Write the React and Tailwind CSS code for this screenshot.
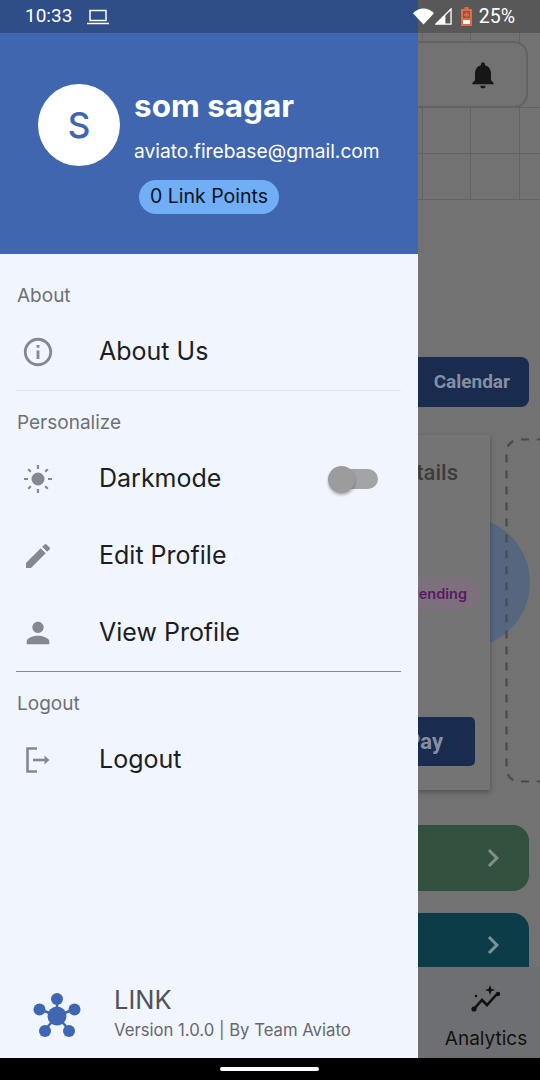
import { MdInfoOutline, MdEdit, MdPerson, MdNotifications, MdChevronRight } from "react-icons/md";

function SunIcon() {
  return (
    <svg viewBox="0 0 30 30" className="h-[30px] w-[30px] text-[#85888e]" fill="currentColor" stroke="currentColor">
      <circle cx="15" cy="15" r="6.5" stroke="none" />
      <g strokeWidth="2.2" fill="none">
        <path d="M15 1v4M15 25v4M1 15h4M25 15h4M5.2 5.2l2.6 2.6M22.2 22.2l2.6 2.6M5.2 24.8l2.6-2.6M22.2 7.8l2.6-2.6" />
      </g>
    </svg>
  );
}

function LogoutIcon() {
  return (
    <svg viewBox="0 0 30 30" className="h-[30px] w-[30px] text-[#85888e]" fill="none" stroke="currentColor">
      <path d="M14 3.500H4.500v23H14" strokeWidth="2.600" />
      <path d="M10 15h14" strokeWidth="2.600" />
      <path d="M21.500 10.500l5 4.500-5 4.500z" fill="currentColor" stroke="none" />
    </svg>
  );
}

function Row({ icon, label, children }) {
  return (
    <div className="flex h-[77px] items-center">
      <div className="flex w-[99px] justify-start pl-[21px]">
        <div className="flex w-[34px] justify-center">{icon}</div>
      </div>
      <span className="text-[25px] leading-none text-[#1c1e24]">{label}</span>
      {children}
    </div>
  );
}

function SectionLabel({ children }) {
  return <div className="pl-[17px] text-[19px] leading-[24px] text-[#6d7077]">{children}</div>;
}

function Logo() {
  return (
    <svg viewBox="0 0 48 48" className="mt-[6px] h-[48px] w-[48px] text-[#3f66b3]" fill="currentColor" stroke="currentColor">
      <path d="M24 24V8M24 24L6 17M24 24L42 17M24 24L11 39M24 24L37 39" strokeWidth="2.500" />
      <g stroke="none">
        <circle cx="24" cy="24" r="9.500" />
        <circle cx="24" cy="7" r="6" />
        <circle cx="6.500" cy="17.500" r="6" />
        <circle cx="41.500" cy="17.500" r="6" />
        <circle cx="12" cy="39" r="6" />
        <circle cx="36" cy="39" r="6" />
      </g>
    </svg>
  );
}

function StatusBar() {
  return (
    <div className="flex h-[33px] items-center justify-between bg-[linear-gradient(90deg,#2f4d86_418px,#585858_418px)] pl-[25px] pr-[25px] font-['Roboto',sans-serif] text-[19px] text-white">
      <div className="flex items-center gap-[15px]">
        <span>10:33</span>
        <svg viewBox="0 0 22 16" className="h-[16px] w-[22px]" fill="none" stroke="currentColor" strokeWidth="1.500">
          <rect x="3" y="1.500" width="16" height="10" />
          <path d="M0 14.500h22" />
        </svg>
      </div>
      <div className="flex items-center">
        <svg viewBox="0 0 22 17" className="h-[17px] w-[21px]" fill="currentColor">
          <path d="M11 17L0 5C3 2 7 0 11 0s8 2 11 5z" />
        </svg>
        <svg viewBox="0 0 18 18" className="ml-[1px] h-[17px] w-[17px]">
          <path d="M17 1v16H1z" fill="none" stroke="currentColor" strokeWidth="1.400" />
          <path d="M11 7v10H1z" fill="currentColor" />
        </svg>
        <svg viewBox="0 0 11 19" className="ml-[9px] h-[19px] w-[11px]">
          <path d="M3.500 0h4v2H11v17H0V2h3.500z" fill="#e8693f" />
          <path d="M2 4h7v7H2z" fill="#7d5d50" />
          <path d="M4.500 5.500h2v1.600h1.600v1.600H6.500v1.600h-2V8.700H3V7.100h1.500z" fill="#e8693f" />
          <path d="M2 13h7v4H2z" fill="#fff" />
        </svg>
        <span className="ml-[7px] text-[19.5px]">25%</span>
      </div>
    </div>
  );
}

function Drawer() {
  return (
    <div className="flex h-full w-[418px] shrink-0 flex-col bg-[#f1f5fd]">
      <div className="flex h-[221px] shrink-0 items-start gap-[14px] bg-[#4066b0] pl-[38px] pt-[51px]">
        <div className="flex h-[82px] w-[82px] items-center justify-center rounded-full bg-white text-[35px] font-medium text-[#4066b0]">S</div>
        <div className="flex flex-col">
          <div className="mt-[3px] text-[31.5px] font-bold leading-[38px] text-white">som sagar</div>
          <div className="mt-[14px] whitespace-nowrap text-[19.2px] leading-[24px] text-white">aviato.firebase@gmail.com</div>
          <div className="ml-[5px] mt-[17px] flex h-[34px] w-[140px] items-center justify-center rounded-full bg-[#70aef5] text-[19.5px] text-[#0b1220]">0 Link Points</div>
        </div>
      </div>

      <div className="mt-[30px]">
        <SectionLabel>About</SectionLabel>
      </div>
      <div className="mt-[5px]">
        <Row icon={<MdInfoOutline className="h-[34px] w-[34px] text-[#85888e]" />} label="About Us" />
      </div>
      <div className="ml-[16px] h-px w-[385px] bg-[#e3e6ec]" />
      <div className="mt-[20px]">
        <SectionLabel>Personalize</SectionLabel>
      </div>
      <div className="mt-[5px]">
        <Row icon={<SunIcon />} label="Darkmode">
          <div className="relative ml-auto mr-[40px] h-[20px] w-[50px]">
            <div className="ml-[12px] h-[20px] w-[38px] rounded-full bg-[#a3a4a6]" />
            <div className="absolute -top-[3px] left-0 h-[27px] w-[27px] rounded-full bg-[#9c9c9c] shadow-[0_2px_3px_rgba(0,0,0,0.3)]" />
          </div>
        </Row>
        <Row icon={<MdEdit className="h-[32px] w-[32px] text-[#85888e]" />} label="Edit Profile" />
        <Row icon={<MdPerson className="h-[34px] w-[34px] text-[#85888e]" />} label="View Profile" />
      </div>
      <div className="ml-[16px] h-px w-[385px] bg-[#85888e]" />
      <div className="mt-[20px]">
        <SectionLabel>Logout</SectionLabel>
      </div>
      <div className="mt-[5px]">
        <Row icon={<LogoutIcon />} label="Logout" />
      </div>

      <div className="mt-auto flex items-center pb-[17px] pl-[33px]">
        <Logo />
        <div className="ml-[33px] flex flex-col">
          <span className="text-[25.5px] leading-[30px] text-[#505257]">LINK</span>
          <span className="mt-[4px] whitespace-nowrap text-[16.7px] leading-[22px] text-[#65686e]">Version 1.0.0 | By Team Aviato</span>
        </div>
      </div>
    </div>
  );
}

function BackgroundStrip() {
  return (
    <div className="relative flex h-full w-[122px] shrink-0 flex-col overflow-hidden bg-[#727272]">
      <div className="relative h-[167px] shrink-0">
        <svg viewBox="0 0 122 167" className="absolute inset-0 h-full w-full" fill="none" stroke="#636363" strokeWidth="1">
          <path d="M4.500 0v167M52.500 0v167M101.500 0v167M0 74.500h122M0 120.500h122M0 166.500h122" />
        </svg>
        <div className="relative -ml-[30px] mr-[12px] mt-[8px] flex h-[67px] items-center justify-end rounded-[14px] border-2 border-[#636363] bg-[#727272] pr-[27px]">
          <MdNotifications className="h-[32px] w-[32px] text-[#161616]" />
        </div>
      </div>

      <div className="ml-[-20px] mr-[11px] mt-[157px] flex h-[50px] shrink-0 items-center justify-end rounded-[8px] bg-[#1a2b50] pr-[19px] font-['Roboto',sans-serif] text-[19px] font-bold text-[#858ea2]">
        Calendar
      </div>

      <div className="relative mt-[28px] flex h-[355px] shrink-0">
        <div className="absolute right-[10px] top-[82px] h-[131px] w-[131px] rounded-full bg-[#56667f]" />
        <div className="relative h-[355px] w-[72px] shrink-0 bg-[#747474] shadow-[0_2px_5px_rgba(0,0,0,0.3)]">
          <div className="absolute right-[32px] top-[25px] whitespace-nowrap font-['Roboto',sans-serif] text-[22px] font-medium leading-[26px] text-[#3c3c3c]">Details</div>
          <div className="absolute -left-[40px] right-[10px] top-[142px] flex h-[33px] items-center justify-end rounded-full bg-[#7d707d] pr-[13px] text-[14.500px] font-semibold text-[#5a1868]">Pending</div>
          <div className="absolute -left-[40px] right-[15px] top-[282px] flex h-[49px] items-center justify-end rounded-[5px] bg-[#1a2b50] pr-[32px] font-['Roboto',sans-serif] text-[22px] font-bold text-[#858ea2]">Pay</div>
        </div>
        <svg viewBox="0 0 60 345" className="relative ml-[15px] mt-[3px] h-[345px] w-[60px] shrink-0 text-[#4a4a4a]" fill="none">
          <path d="M40 1.500H14A12.500 12.500 0 0 0 1.500 14v317A12.500 12.500 0 0 0 14 343.500h46" stroke="currentColor" strokeWidth="2.200" strokeDasharray="8 8" />
        </svg>
      </div>

      <div className="-ml-[20px] mr-[11px] mt-[35px] flex h-[66px] shrink-0 items-center justify-end rounded-[16px] bg-[#32503e] pr-[18px]">
        <MdChevronRight className="h-[36px] w-[36px] text-[#7f8f84]" />
      </div>
      <div className="-ml-[20px] mr-[11px] mt-[22px] flex h-[54px] shrink-0 items-start justify-end rounded-t-[16px] bg-[#0c3c47] pr-[18px] pt-[14px]">
        <MdChevronRight className="h-[36px] w-[36px] text-[#7c9194]" />
      </div>

      <div className="flex flex-1 flex-col items-center bg-[#6e6f72] pl-[14px] pt-[15px] text-[#111111]">
        <svg viewBox="0 0 32 32" className="h-[32px] w-[32px]" fill="currentColor" stroke="currentColor">
          <path d="M4 27l8-9 5 5 10-11" fill="none" strokeWidth="2.600" />
          <circle cx="4" cy="27" r="2.600" stroke="none" />
          <circle cx="28" cy="12" r="2.200" stroke="none" />
          <circle cx="6" cy="14" r="1.300" stroke="none" />
          <path d="M20 3l1.300 3.700L25 8l-3.700 1.300L20 13l-1.300-3.700L15 8l3.700-1.300z" stroke="none" />
        </svg>
        <span className="mt-[13px] text-[19px] leading-[24px]">Analytics</span>
      </div>
    </div>
  );
}

export default function App() {
  return (
    <div className="flex h-[1080px] w-[540px] flex-col overflow-hidden bg-black font-['Inter',sans-serif]">
      <StatusBar />
      <div className="flex h-[1025px] shrink-0">
        <Drawer />
        <BackgroundStrip />
      </div>
      <div className="flex flex-1 items-center justify-center pr-[1px]">
        <div className="h-[4px] w-[99px] rounded-full bg-white" />
      </div>
    </div>
  );
}
